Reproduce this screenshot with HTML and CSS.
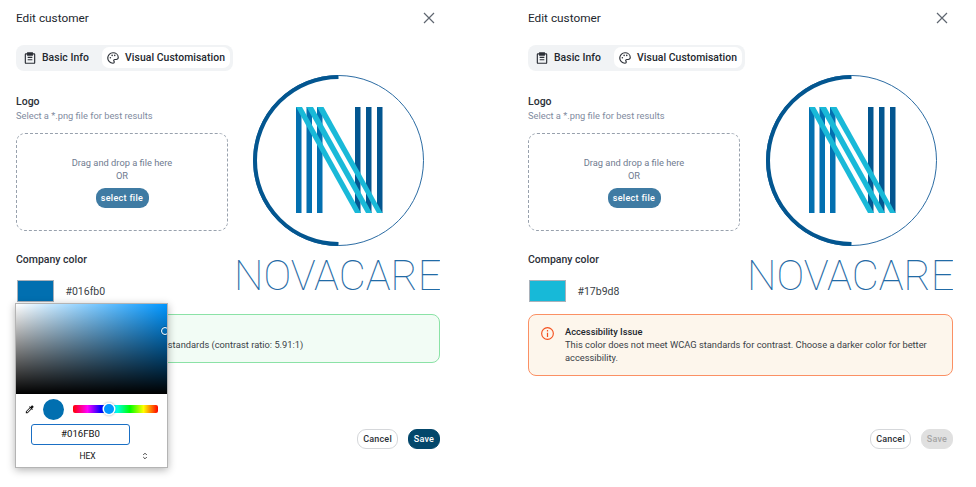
FILE: index.html
```html
<!DOCTYPE html>
<html lang="en">
<head>
<meta charset="utf-8">
<title>Edit customer</title>
<link rel="stylesheet" href="styles.css">
</head>
<body>
<svg class="defs" width="0" height="0" aria-hidden="true">
  <defs>
    <symbol id="logo" viewBox="0 0 205 221">
      <circle cx="103.500" cy="86.500" r="85" fill="none" stroke="#2a6ba3" stroke-width="1"/>
      <path d="M103.500 3A83.500 83.500 0 0 0 103.500 170" fill="none" stroke="#01558f" stroke-width="4"/>
      <g fill="#016fb0">
        <rect x="61" y="33" width="5.500" height="106"/>
        <rect x="71.500" y="33" width="5.500" height="106"/>
        <rect x="82" y="33" width="5.500" height="106"/>
      </g>
      <g fill="#01558f">
        <rect x="120" y="33" width="5.500" height="106"/>
        <rect x="131" y="33" width="5.500" height="106"/>
        <rect x="142" y="33" width="5.500" height="106"/>
      </g>
      <g fill="#17b9d8">
        <polygon points="61,33 67,33 126,139 120,139"/>
        <polygon points="71.500,33 78,33 137,139 131,139"/>
        <polygon points="82,33 88.500,33 147.500,139 142,139"/>
      </g>
      <text class="logo-word" x="-1" y="216" textLength="207.500" lengthAdjust="spacingAndGlyphs">NOVACARE</text>
    </symbol>
    <symbol id="ic-clip" viewBox="0 0 24 24">
      <path fill="none" stroke="#2b2f36" stroke-width="2" d="M5 5h14a1 1 0 0 1 1 1v14a1 1 0 0 1-1 1H5a1 1 0 0 1-1-1V6a1 1 0 0 1 1-1zM8 7V3h8v4zM8 11h8M8 15h8"/>
    </symbol>
    <symbol id="ic-palette" viewBox="0 0 24 24">
      <path fill="none" stroke="#2b2f36" stroke-width="2" d="M12 3a9 9 0 0 0 0 18c1.500 0 2.200-1 2.200-2 0-1.200-1-1.700-1-2.800 0-1 .8-1.700 1.800-1.700h2.500A3.500 3.500 0 0 0 21 11c0-4.500-4-8-9-8z"/>
      <circle cx="7.500" cy="11.500" r="1.300" fill="#2b2f36"/>
      <circle cx="10.500" cy="7.500" r="1.300" fill="#2b2f36"/>
      <circle cx="15" cy="7.500" r="1.300" fill="#2b2f36"/>
    </symbol>
    <symbol id="ic-close" viewBox="0 0 12 12">
      <path fill="none" stroke="#5f6670" stroke-width="1.200" d="M1 1l10 10M11 1L1 11"/>
    </symbol>
  </defs>
</svg>

<main class="page">
  <section class="panel">
    <header class="head">
      <h2 class="title">Edit customer</h2>
      <button class="close" aria-label="Close"><svg class="close-ic"><use href="#ic-close"/></svg></button>
    </header>
    <div class="tabs">
      <div class="tab"><svg class="tab-ic"><use href="#ic-clip"/></svg>Basic Info</div>
      <div class="tab tab-on"><svg class="tab-ic"><use href="#ic-palette"/></svg>Visual Customisation</div>
    </div>
    <div class="split">
      <div class="col">
        <div class="label">Logo</div>
        <div class="hint">Select a *.png file for best results</div>
        <div class="drop">
          <div>Drag and drop a file here</div>
          <div>OR</div>
          <button class="pick">select file</button>
        </div>
        <div class="label label-color">Company color</div>
        <div class="color-row">
          <span class="swatch swatch-blue"></span>
          <span class="hex">#016fb0</span>
          <div class="popover">
            <div class="sv"><span class="sv-handle"></span></div>
            <div class="pop-row">
              <svg class="dropper" viewBox="0 0 24 24"><path fill="#111" d="M20.700 5.600l-2.300-2.300a1 1 0 0 0-1.400 0l-3 3-1.500-1.500-1.400 1.400 1.400 1.400-8.500 8.500V20h3.900l8.500-8.500 1.400 1.400 1.400-1.400-1.500-1.500 3-3a1 1 0 0 0 0-1.400zM7 18.300l-1.300-1.300 8.100-8.100 1.300 1.300z"/></svg>
              <span class="dot"></span>
              <div class="hue"><span class="hue-thumb"></span></div>
            </div>
            <div class="hex-input">#016FB0</div>
            <div class="mode"><span>HEX</span><svg class="updown" viewBox="0 0 6 8"><path fill="none" stroke="#333" stroke-width=".9" d="M1.200 3L3 1.200 4.800 3M1.200 5L3 6.800 4.800 5"/></svg></div>
          </div>
        </div>
      </div>
      <svg class="logo"><use href="#logo"/></svg>
    </div>
    <div class="alert alert-ok">
      <svg class="alert-ic" viewBox="0 0 16 16"><circle cx="8" cy="8" r="7.200" fill="none" stroke="#22a355" stroke-width="1.400"/></svg>
      <div>
        <div class="alert-title">Accessibility Pass</div>
        <div>This color meets WCAG AA standards (contrast ratio: 5.91:1)</div>
      </div>
    </div>
    <footer class="foot">
      <button class="btn">Cancel</button>
      <button class="btn btn-save">Save</button>
    </footer>
  </section>

  <section class="panel">
    <header class="head">
      <h2 class="title">Edit customer</h2>
      <button class="close" aria-label="Close"><svg class="close-ic"><use href="#ic-close"/></svg></button>
    </header>
    <div class="tabs">
      <div class="tab"><svg class="tab-ic"><use href="#ic-clip"/></svg>Basic Info</div>
      <div class="tab tab-on"><svg class="tab-ic"><use href="#ic-palette"/></svg>Visual Customisation</div>
    </div>
    <div class="split">
      <div class="col">
        <div class="label">Logo</div>
        <div class="hint">Select a *.png file for best results</div>
        <div class="drop">
          <div>Drag and drop a file here</div>
          <div>OR</div>
          <button class="pick">select file</button>
        </div>
        <div class="label label-color">Company color</div>
        <div class="color-row">
          <span class="swatch swatch-cyan"></span>
          <span class="hex">#17b9d8</span>
        </div>
      </div>
      <svg class="logo"><use href="#logo"/></svg>
    </div>
    <div class="alert alert-warn">
      <svg class="alert-ic" viewBox="0 0 16 16"><circle cx="8" cy="8" r="7.200" fill="none" stroke="#f4511e" stroke-width="1.400"/><path fill="none" stroke="#f4511e" stroke-width="1.500" d="M8 3.800v1.600M8 7v5.200"/></svg>
      <div>
        <div class="alert-title">Accessibility Issue</div>
        <div>This color does not meet WCAG standards for contrast. Choose a darker color for better accessibility.</div>
      </div>
    </div>
    <footer class="foot">
      <button class="btn">Cancel</button>
      <button class="btn btn-off">Save</button>
    </footer>
  </section>
</main>
</body>
</html>
```

FILE: styles.css
```css
* { box-sizing: border-box; }
html, body { margin: 0; height: 100%; }
body {
  background: #fff;
  font-family: Roboto, "Liberation Sans", sans-serif;
  color: #23272e;
  overflow: hidden;
}
.defs { position: absolute; }
.page {
  display: grid;
  grid-template-columns: 456px 457px;
  column-gap: 56px;
}
.panel {
  height: 465px;
  padding: 0 16px 16px;
  display: flex;
  flex-direction: column;
}
.head {
  height: 36px;
  display: flex;
  align-items: center;
  justify-content: space-between;
}
.title {
  margin: 0;
  font-size: 11.800px;
  font-weight: 400;
  color: #23272e;
}
.close {
  border: 0;
  padding: 0;
  background: none;
  width: 12px;
  height: 12px;
  margin-right: 5px;
  display: flex;
}
.close-ic { width: 12px; height: 12px; }
.tabs {
  margin-top: 9px;
  width: 217px;
  height: 26px;
  padding: 2px 3px 3px;
  display: flex;
  align-items: center;
  background: #f1f3f5;
  border-radius: 8px;
}
.tab {
  height: 21px;
  padding: 0 5px 0 4px;
  display: flex;
  align-items: center;
  gap: 5px;
  font-size: 10.400px;
  font-weight: 500;
  letter-spacing: .05px;
  white-space: nowrap;
  border-radius: 7px;
}
.tab-on { background: #fff; margin-left: auto; padding: 0 5px 0 4px; }
.tab-ic { width: 14px; height: 14px; flex: none; }
.split {
  display: flex;
  justify-content: space-between;
  margin-top: 3px;
  height: 221px;
}
.col {
  width: 212px;
  padding-top: 21px;
}
.label {
  font-size: 10.500px;
  font-weight: 500;
  line-height: 14px;
  color: #2b3038;
}
.hint {
  font-size: 9.300px;
  line-height: 14px;
  color: #7f8ba0;
}
.drop {
  margin-top: 10px;
  height: 98px;
  border: 1px dashed #98a1ad;
  border-radius: 9px;
  display: flex;
  flex-direction: column;
  align-items: center;
  justify-content: center;
  font-size: 9.300px;
  line-height: 13px;
  color: #6f7b8f;
}
.pick {
  margin-top: 6px;
  height: 20px;
  width: 53px;
  padding: 0;
  border: 0;
  border-radius: 9px;
  background: #3f7ba3;
  color: #fff;
  font: 500 9px Roboto, sans-serif;
  letter-spacing: .3px;
}
.label-color { margin-top: 22px; }
.color-row {
  position: relative;
  margin-top: 13px;
  display: flex;
  align-items: center;
  gap: 11.500px;
  padding-left: 1px;
}
.swatch {
  width: 37px;
  height: 22px;
  border: 1px solid #a9b1ba;
}
.swatch-blue { background: #016fb0; }
.swatch-cyan { background: #17b9d8; }
.hex { font-size: 10.500px; color: #3a3f47; }
.popover {
  position: absolute;
  z-index: 5;
  left: -1px;
  top: 23px;
  width: 153px;
  height: 165px;
  background: #fff;
  border: 1px solid #b4b4b4;
  box-shadow: 0 2px 8px rgba(0,0,0,.3);
  color: #111;
}
.sv {
  position: relative;
  height: 90px;
  overflow: hidden;
  background:
    linear-gradient(to top, #000, rgba(0,0,0,0)),
    linear-gradient(to right, #fff, #0096ff);
}
.sv-handle {
  position: absolute;
  right: -2px;
  top: 23px;
  width: 8px;
  height: 8px;
  border: 1.500px solid #fff;
  border-radius: 50%;
  box-shadow: 0 0 0 .5px rgba(0,0,0,.4);
}
.pop-row {
  display: flex;
  align-items: center;
  height: 30px;
  padding-left: 8px;
}
.dropper { width: 11px; height: 11px; flex: none; }
.dot {
  width: 21px;
  height: 21px;
  margin-left: 8px;
  border-radius: 50%;
  background: #016fb0;
  flex: none;
}
.hue {
  position: relative;
  width: 85px;
  height: 8px;
  margin-left: 9px;
  border-radius: 2px;
  background: linear-gradient(to right, #f00, #f0f 17%, #00f 33%, #0ff 50%, #0f0 67%, #ff0 83%, #f00);
}
.hue-thumb {
  position: absolute;
  left: 31px;
  top: -1px;
  width: 10px;
  height: 10px;
  border-radius: 50%;
  background: #0096ff;
  box-shadow: 0 0 0 1.500px #fff, 0 0 2px 2px rgba(0,0,0,.2);
}
.hex-input {
  margin-left: 15px;
  width: 99px;
  height: 21px;
  border: 1.500px solid #1a6fc4;
  border-radius: 3px;
  text-align: center;
  font-size: 9.600px;
  line-height: 18px;
}
.mode {
  position: relative;
  margin-top: 5px;
  height: 12px;
  font-size: 8.500px;
  line-height: 12px;
  text-align: center;
  padding-right: 8px;
}
.updown {
  position: absolute;
  right: 19px;
  top: 2px;
  width: 6px;
  height: 8px;
}
.logo {
  width: 205px;
  height: 221px;
  flex: none;
  overflow: visible;
  opacity: .99;
}
.logo-word {
  font-family: Roboto, sans-serif;
  font-weight: 100;
  font-size: 43px;
  fill: #1f6aa5;
}
.alert {
  margin-top: 19px;
  padding: 10px 12px;
  display: flex;
  gap: 11px;
  border-radius: 8px;
  border: 1px solid;
  font-size: 9.300px;
  line-height: 13px;
  color: #3a3f47;
}
.alert-ok { background: #f2fcf5; border-color: #8be2a6; height: 48.500px; }
.alert-warn { background: #fdf6ec; border-color: #fb9064; height: 62px; }
.alert-ic { width: 13px; height: 13px; flex: none; margin-top: 2px; }
.alert-title { font-weight: 500; color: #23272e; }
.foot {
  margin-top: auto;
  display: flex;
  justify-content: flex-end;
  gap: 10px;
}
.btn {
  height: 20px;
  width: 41px;
  padding: 0;
  border: 1px solid #d5d7da;
  border-radius: 9px;
  background: #fff;
  color: #2b3038;
  font: 500 9px Roboto, sans-serif;
  letter-spacing: .2px;
}
.btn-save { width: 32px; background: #03476b; border-color: #03476b; color: #fff; }
.btn-off { width: 32px; background: #e0e0e0; border-color: #e0e0e0; color: #a5a5a5; }
```
